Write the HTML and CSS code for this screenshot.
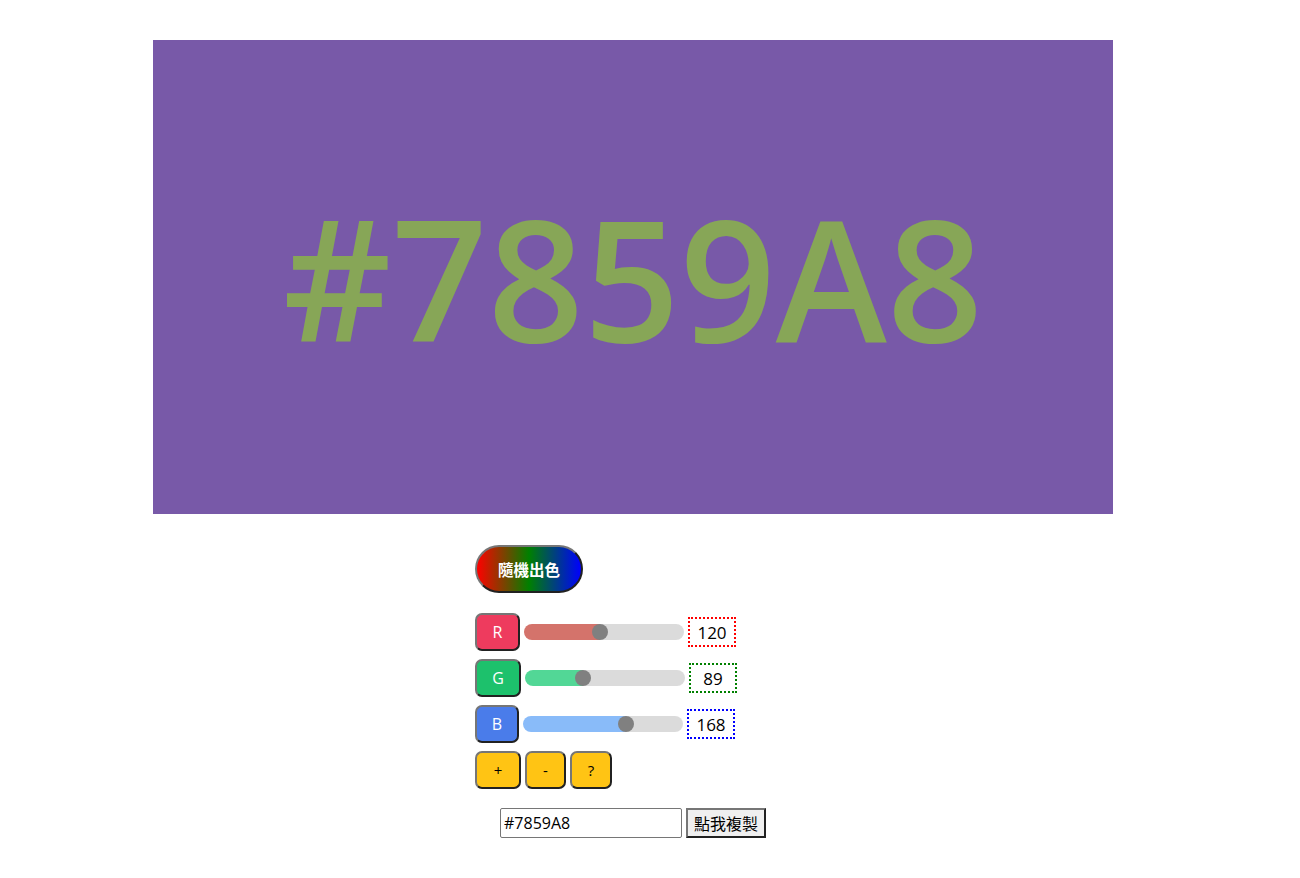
FILE: index.html
```html
<!DOCTYPE html>
<html lang="zh-Hant">
<head>
<meta charset="utf-8">
<title>隨機出色</title>
<link rel="stylesheet" href="styles.css">
</head>
<body>
<div class="page">
  <div class="panel">
    <div class="hex">#7859A8</div>
  </div>
  <div class="controls">
    <button class="random">隨機出色</button>
    <div class="rows">
      <div class="row">
        <button class="ch ch-r">R</button>
        <input class="slider slider-r" type="range" min="0" max="255" value="120" style="--p: calc(8px + (100% - 16px) * 120 / 255)">
        <span class="num num-r">120</span>
      </div>
      <div class="row">
        <button class="ch ch-g">G</button>
        <input class="slider slider-g" type="range" min="0" max="255" value="89" style="--p: calc(8px + (100% - 16px) * 89 / 255)">
        <span class="num num-g">89</span>
      </div>
      <div class="row">
        <button class="ch ch-b">B</button>
        <input class="slider slider-b" type="range" min="0" max="255" value="168" style="--p: calc(8px + (100% - 16px) * 168 / 255)">
        <span class="num num-b">168</span>
      </div>
      <div class="row">
        <button class="ch ch-y ch-plus">+</button>
        <button class="ch ch-y ch-minus">-</button>
        <button class="ch ch-y ch-help">?</button>
      </div>
    </div>
    <div class="copy">
      <input class="hexin" type="text" value="#7859A8">
      <button class="copybtn">點我複製</button>
    </div>
  </div>
</div>
</body>
</html>
```

FILE: styles.css
```css
html, body {
  margin: 0;
  padding: 0;
  background: #fff;
}

.page {
  padding-top: 40px;
  font-family: "Open Sans", "Noto Sans CJK TC", sans-serif;
}

.panel {
  margin-left: 153px;
  width: 960px;
  height: 474px;
  background: #7859A8;
  display: flex;
  align-items: center;
  justify-content: center;
}

.hex {
  color: #87A657;
  font-family: "Open Sans", sans-serif;
  font-weight: 600;
  font-size: 168px;
  line-height: 1;
  padding-top: 0;
  padding-left: 0;
}

.controls {
  margin-left: 475px;
  padding-top: 31px;
  display: flex;
  flex-direction: column;
  align-items: flex-start;
}

.random {
  width: 108px;
  height: 48px;
  border-radius: 24px;
  border: 2px outset #767676;
  background: linear-gradient(to right, #ff0000, #008000, #0000ff);
  color: #fff;
  font-family: "Noto Sans CJK TC", sans-serif;
  font-weight: 700;
  font-size: 15.5px;
  padding: 0;
  margin: 0;
}

.rows {
  margin-top: 20px;
  display: flex;
  flex-direction: column;
  gap: 8px;
}

.row {
  display: flex;
  align-items: center;
  gap: 4px;
  height: 38px;
}

.ch {
  height: 38px;
  padding: 0;
  margin: 0;
  border: 2px outset #767676;
  border-radius: 7px;
  color: #fff;
  font-family: "Open Sans", sans-serif;
  font-size: 16px;
}

.ch-r { background: #EE3B5E; width: 45px; }
.ch-g { background: #1DC16C; width: 46px; }
.ch-b { background: #4A7CEA; width: 44px; }
.ch-y {
  background: #FFC414;
  color: #000;
  font-size: 15px;
}
.ch-plus { width: 46px; }
.ch-minus { width: 41px; }
.ch-help { width: 42px; }

.slider {
  -webkit-appearance: none;
  appearance: none;
  width: 160px;
  height: 16px;
  margin: 0;
  border-radius: 8px;
  outline: none;
}

.slider-r { background: linear-gradient(to right, #D4736B var(--p), #DBDBDB var(--p)); }
.slider-g { background: linear-gradient(to right, #52D796 var(--p), #DBDBDB var(--p)); }
.slider-b { background: linear-gradient(to right, #89BBF9 var(--p), #DBDBDB var(--p)); }

.slider::-webkit-slider-thumb {
  -webkit-appearance: none;
  appearance: none;
  width: 16px;
  height: 16px;
  border-radius: 50%;
  background: #808080;
  border: none;
}

.num {
  box-sizing: border-box;
  width: 48px;
  height: 30px;
  display: flex;
  align-items: center;
  justify-content: center;
  font-size: 17px;
  color: #000;
}
.num-r { border: 2px dotted #ff0000; }
.num-g { border: 2px dotted #008000; }
.num-b { border: 2px dotted #0000ff; }

.copy {
  margin-top: 19px;
  margin-left: 25px;
  display: flex;
  gap: 4px;
}

.hexin {
  box-sizing: border-box;
  width: 182px;
  height: 30px;
  margin: 0;
  padding: 0 3px;
  border: 1px solid #767676;
  border-radius: 2px;
  font-family: "Open Sans", sans-serif;
  font-size: 16px;
  color: #000;
}

.copybtn {
  box-sizing: border-box;
  width: 80px;
  height: 30px;
  margin: 0;
  padding: 0;
  border: 2px outset #767676;
  background: #EFEFEF;
  font-family: "Noto Sans CJK TC", sans-serif;
  font-size: 16px;
  color: #000;
}
```
